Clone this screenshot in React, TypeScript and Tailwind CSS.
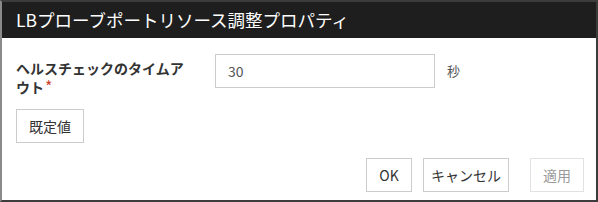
export default function App() {
  return (
    <div
      className="flex h-[202px] w-[598px] flex-col border-2 border-[#3c3c3c] border-l-[#8a8a8a] bg-white"
      style={{ fontFamily: '"Noto Sans CJK JP", "Noto Sans", sans-serif' }}
    >
      <div className="flex h-[36px] shrink-0 items-center bg-[#1e1e1e] px-[14px] text-[17.5px] text-white">
        LBプローブポートリソース調整プロパティ
      </div>
      <div className="flex flex-1 flex-col pl-[14px] pr-[12px]">
        <div className="mt-[16px] flex items-start">
          <div className="mr-[23px] w-[176px] pt-[5px] text-[14px] font-semibold leading-[19px] text-[#333]">
            ヘルスチェックのタイムアウト
            <span className="ml-[1px] inline-block h-[14px] align-top text-[16px] leading-[16px] font-normal text-[#c9452e]">
              *
            </span>
          </div>
          <div className="flex h-[34px] w-[220px] items-center border border-[#cccccc] px-[12px] text-[14px] text-[#555]">
            30
          </div>
          <div className="ml-[12px] flex h-[34px] items-center text-[13px] text-[#555]">秒</div>
        </div>
        <div className="mt-[12px]">
          <button className="h-[34px] w-[68px] border border-[#cccccc] text-[14px] text-[#333]">既定値</button>
        </div>
        <div className="mt-[15px] flex justify-end">
          <button className="h-[34px] w-[46px] border border-[#cccccc] text-[14px] text-[#333]">OK</button>
          <button className="ml-[11px] h-[34px] w-[86px] border border-[#cccccc] text-[14px] text-[#333]">キャンセル</button>
          <button className="ml-[21px] h-[34px] w-[54px] border border-[#e2e2e2] text-[14px] text-[#9a9a9a]">適用</button>
        </div>
      </div>
    </div>
  );
}
